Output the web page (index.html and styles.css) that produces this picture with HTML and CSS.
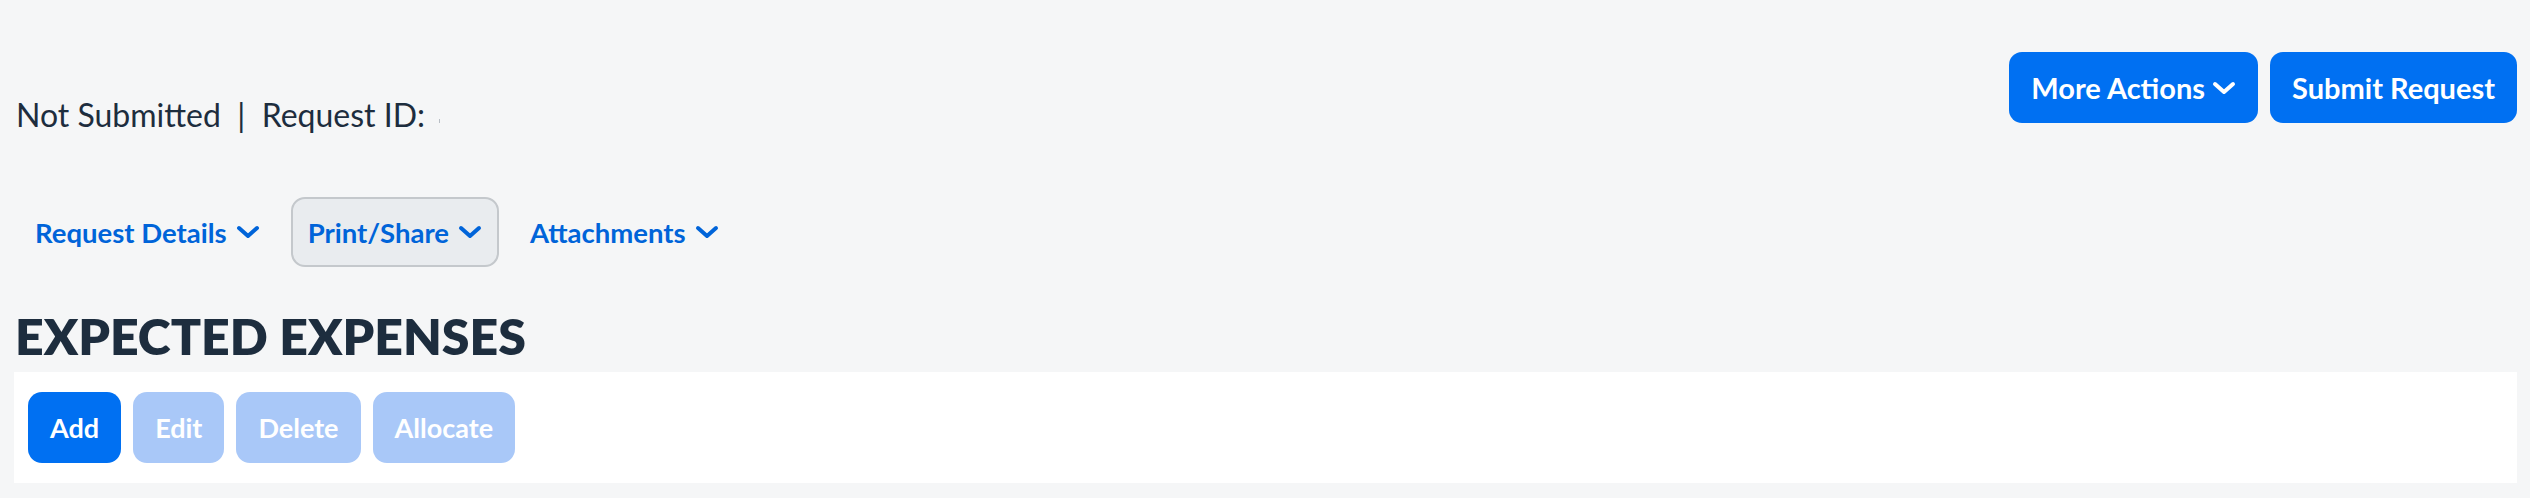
FILE: index.html
```html
<!DOCTYPE html>
<html lang="en">
<head>
    <meta charset="UTF-8">
    <title>Request</title>
    <link rel="stylesheet" href="styles.css">
</head>
<body>
    <div class="page">
        <div class="top-bar">
            <div class="status">Not Submitted &nbsp;|&nbsp; Request ID: <span class="req-id"></span></div>
            <div class="top-actions">
                <button class="btn">More Actions
                    <svg class="chev" viewBox="0 0 24 14"><polyline points="3,3 12,11 21,3"/></svg>
                </button>
                <button class="btn">Submit Request</button>
            </div>
        </div>

        <div class="tabs">
            <div class="tab">Request Details <svg class="chev" viewBox="0 0 24 14"><polyline points="3,3 12,11 21,3"/></svg></div>
            <div class="tab active">Print/Share <svg class="chev" viewBox="0 0 24 14"><polyline points="3,3 12,11 21,3"/></svg></div>
            <div class="tab">Attachments <svg class="chev" viewBox="0 0 24 14"><polyline points="3,3 12,11 21,3"/></svg></div>
        </div>

        <h2 class="section-title">EXPECTED EXPENSES</h2>
        <div class="toolbar">
            <button class="btn small">Add</button>
            <button class="btn small disabled">Edit</button>
            <button class="btn small disabled">Delete</button>
            <button class="btn small disabled">Allocate</button>
        </div>
    </div>
</body>
</html>
```

FILE: styles.css
```css
* {
    margin: 0;
    padding: 0;
    box-sizing: border-box;
    font-family: 'Lato', sans-serif;
}

body {
    background-color: #f5f6f7;
    color: #1d2d3e;
}

.page {
    padding: 52px 13px 0 14px;
}

.top-bar {
    display: flex;
    justify-content: space-between;
    align-items: flex-start;
}

.status {
    font-size: 32px;
    line-height: 40px;
    padding: 43px 0 0 2px;
    white-space: pre;
}

.req-id {
    display: inline-block;
    width: 1px;
    height: 4px;
    background-color: #b8bec5;
    margin-left: 6px;
    vertical-align: 4px;
}

.top-actions {
    display: flex;
    gap: 12px;
}

.btn {
    display: flex;
    align-items: center;
    gap: 7px;
    height: 71px;
    padding: 0 22px;
    background-color: #0070f2;
    color: #ffffff;
    border: none;
    border-radius: 13px;
    font-size: 29px;
    font-weight: 700;
    cursor: pointer;
}

.chev {
    width: 24px;
    height: 14px;
    fill: none;
    stroke: currentColor;
    stroke-width: 4;
    stroke-linecap: round;
    stroke-linejoin: round;
}

.tabs {
    display: flex;
    gap: 14px;
    margin: 62px 0 0 4px;
}

.tab {
    display: flex;
    align-items: center;
    gap: 9px;
    height: 70px;
    padding: 0 15px;
    border: 2px solid transparent;
    border-radius: 14px;
    color: #0064d9;
    font-size: 27.5px;
    font-weight: 700;
}

.tab.active {
    background-color: #e9ecef;
    border-color: #c4c8cc;
}

.section-title {
    font-size: 50px;
    font-weight: 800;
    line-height: 1;
    margin: 44px 0 11px 1px;
}

.toolbar {
    display: flex;
    gap: 12px;
    background-color: #ffffff;
    padding: 20px 14px;
}

.btn.small {
    border-radius: 14px;
    font-size: 27px;
}

.btn.disabled {
    background-color: #a9c8f8;
}
```
